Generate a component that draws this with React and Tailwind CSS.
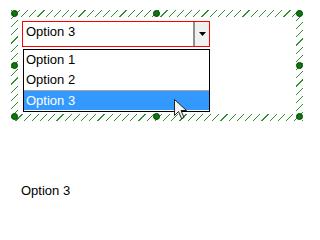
import React from 'react';

const handles = [
  'left-0 top-0',
  'left-[142px] top-0',
  'left-[285px] top-0',
  'left-0 top-[52px]',
  'left-[285px] top-[52px]',
  'left-0 top-[103px]',
  'left-[142px] top-[103px]',
  'left-[285px] top-[103px]',
];

const options = ['Option 1', 'Option 2', 'Option 3'];

export default function App() {
  const selected = 'Option 3';

  return (
    <div className="relative w-[313px] h-[210px] overflow-hidden bg-white pt-[10px] pl-[11px] font-['Liberation_Sans',Arial,sans-serif] text-[13px] text-black">
      {/* designer selection frame */}
      <div className="relative w-[292px] h-[111px] p-[7px] bg-[repeating-linear-gradient(135deg,#2f8f2f_0_0.9px,transparent_0.9px_5.8px)]">
        <div className="w-full h-full bg-white pt-[4px] pl-[4px]">
          {/* combo box */}
          <div className="flex w-[188px] h-[26px] border border-[#ff0000]">
            <div className="flex-1 pl-[3px] pt-[2px] leading-[15px]">{selected}</div>
            <div className="flex items-center justify-center w-[16px] h-full bg-[#f0f0f0] border-l-2 border-[#909090]">
              <svg width="7" height="4" viewBox="0 0 7 4">
                <path d="M0 0h7L3.5 4z" fill="#000" />
              </svg>
            </div>
          </div>

          {/* open list */}
          <div className="ml-[1px] mt-[2px] w-[187px] h-[63px] border border-black">
            {options.map((o) => (
              <div
                key={o}
                className={
                  o === selected
                    ? 'h-[20px] pl-[2px] leading-[19px] bg-[#3399ff] text-white border-t border-[#a0a0a0]'
                    : 'h-[20px] pl-[2px] leading-[20px]'
                }
              >
                {o}
              </div>
            ))}
          </div>
        </div>

        {handles.map((h) => (
          <div
            key={h}
            className={'absolute w-[7px] h-[7px] rounded-full bg-[#0a7a0a] border border-[#034003] ' + h}
          />
        ))}
      </div>

      <div className="mt-[62px] ml-[10px] leading-[15px]">{selected}</div>

      {/* mouse pointer */}
      <svg className="absolute left-[174px] top-[99px]" width="14" height="21" viewBox="0 0 14 21">
        <path
          d="M0.5 0.5v16l4-4 3 7 2.5-1-3-7h5.5z"
          fill="#f4f4f4"
          stroke="#222"
          strokeWidth="1"
          strokeLinejoin="miter"
        />
      </svg>
    </div>
  );
}
